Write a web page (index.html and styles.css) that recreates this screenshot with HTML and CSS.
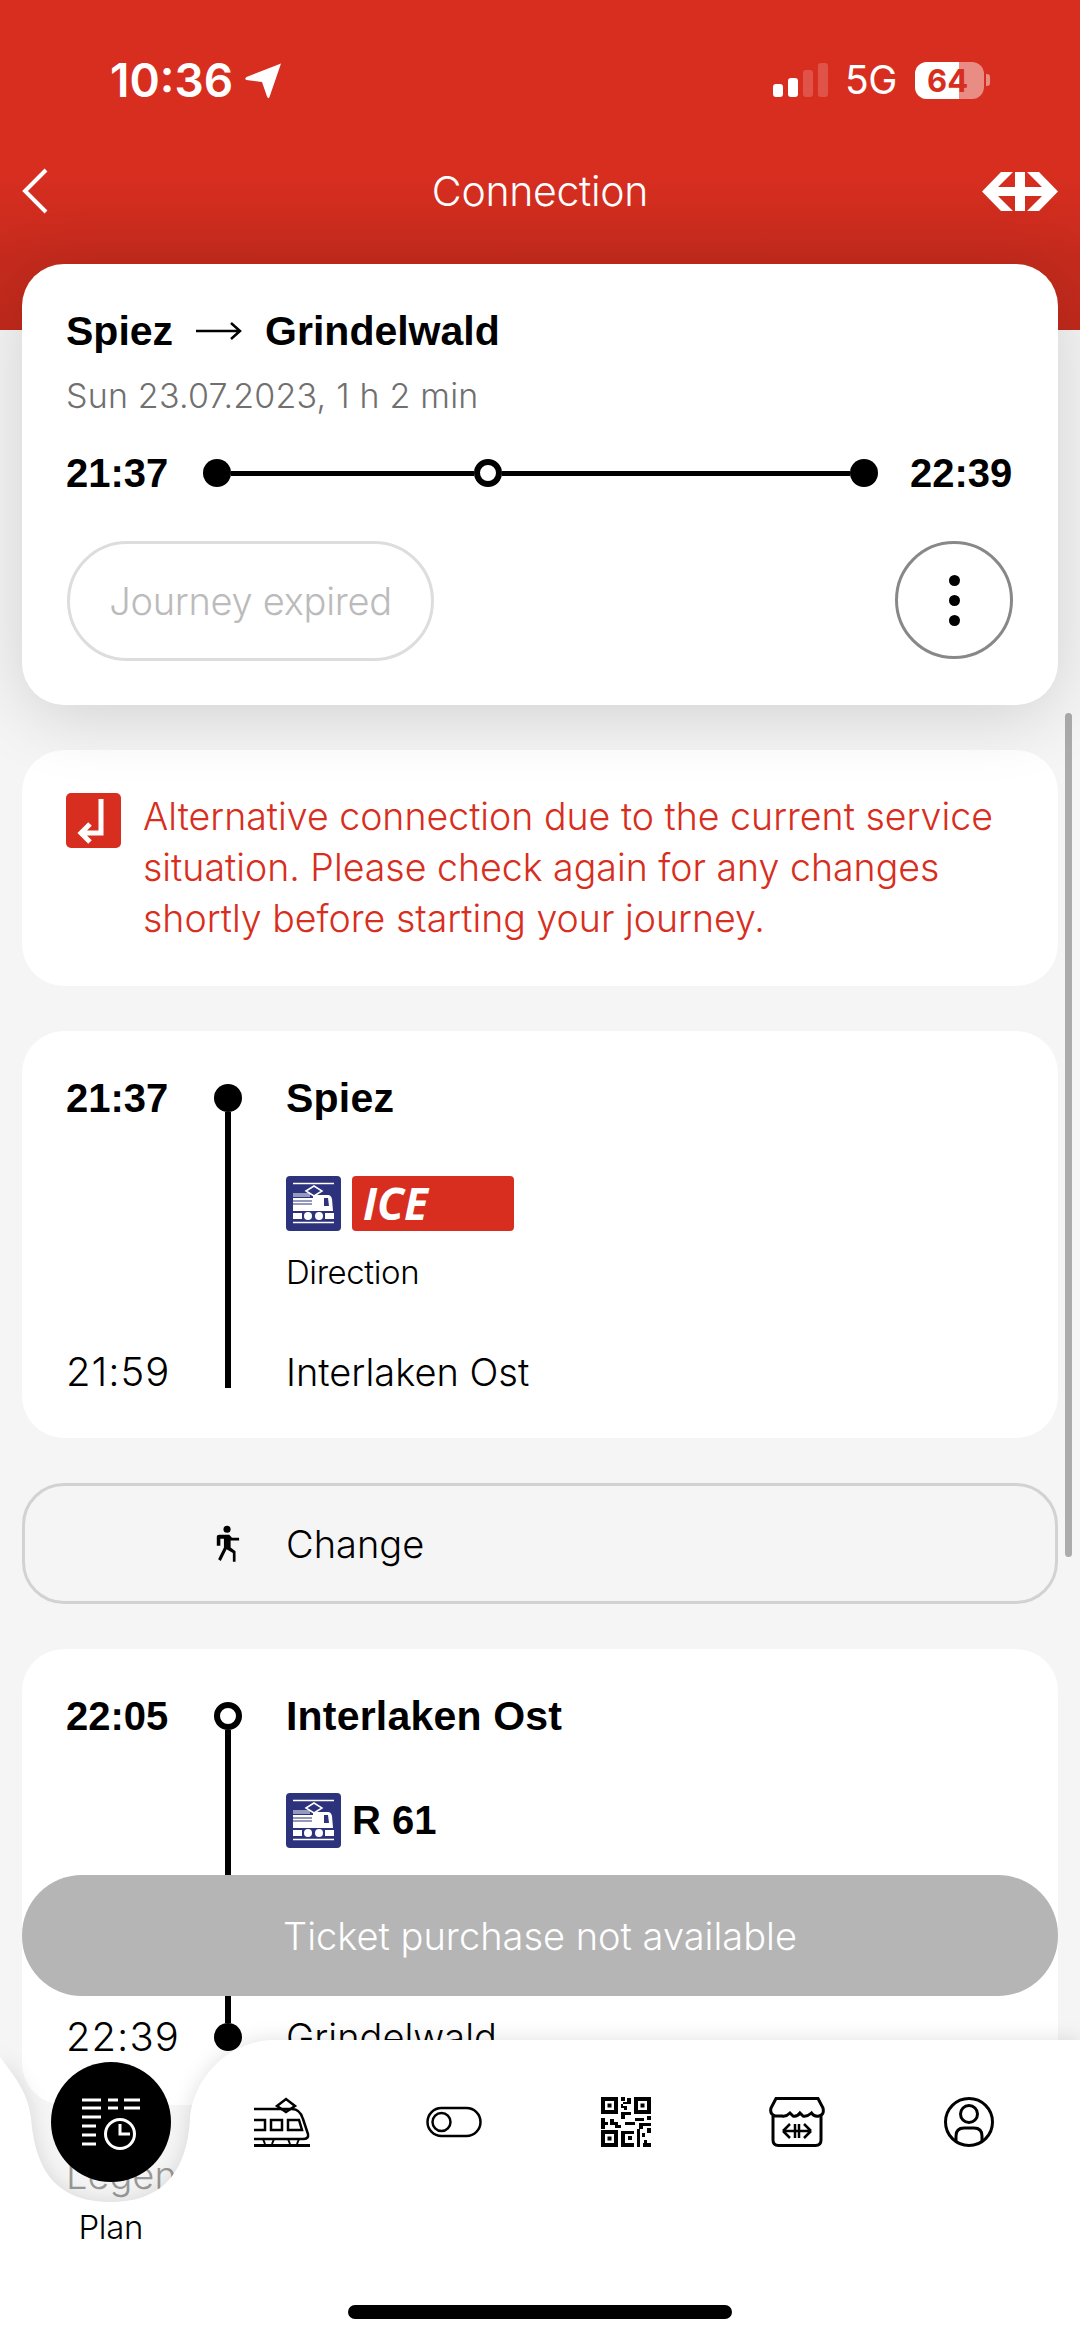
FILE: index.html
```html
<!DOCTYPE html>
<html lang="en">
<head>
<meta charset="utf-8">
<title>Connection</title>
<link rel="stylesheet" href="styles.css">
</head>
<body>
<div class="phone">
  <header class="header">
    <div class="status">
      <div class="clock"><span>10:36</span>
        <svg class="loc" viewBox="0 0 37 36"><path d="M36 0.500 L24.500 34 Q23.500 36.500 22 33.500 L17 19 L1.500 17 Q-1 16 1.500 14 Z" fill="#fff"/></svg>
      </div>
      <div class="status-right">
        <div class="signal"><i class="b1"></i><i class="b2"></i><i class="b3"></i><i class="b4"></i></div>
        <span class="net">5G</span>
        <div class="battery"><div class="battery-fill"></div><span>64</span></div>
        <div class="nub"></div>
      </div>
    </div>
    <nav class="nav">
      <svg class="back" viewBox="0 0 26 46"><path d="M24 2 L3 23 L24 44" fill="none" stroke="#fff" stroke-width="4"/></svg>
      <h1 class="nav-title">Connection</h1>
      <svg class="logo" viewBox="0 0 76 39"><polygon fill="#fff" points="0,19.500 19,0 31,0 16,15 33,15 33,0 43,0 43,15 60,15 45,0 57,0 76,19.500 57,39 45,39 60,24 43,24 43,39 33,39 33,24 16,24 31,39 19,39"/></svg>
    </nav>
  </header>

  <main class="main">
    <section class="card journey">
      <div class="route"><span>Spiez</span>
        <svg class="route-arrow" viewBox="0 0 46 20"><path d="M0 10 H44 M35 2 L44 10 L35 18" fill="none" stroke="#000" stroke-width="2.500"/></svg>
        <span>Grindelwald</span></div>
      <div class="date">Sun 23.07.2023, 1 h 2 min</div>
      <div class="overview">
        <b class="time">21:37</b>
        <div class="track"><i class="dot"></i><i class="track-line short"></i><i class="dot hollow"></i><i class="track-line long"></i><i class="dot"></i></div>
        <b class="time">22:39</b>
      </div>
      <div class="actions">
        <div class="expired">Journey expired</div>
        <div class="more"><i></i><i></i><i></i></div>
      </div>
    </section>

    <section class="card alert">
      <svg class="alert-icon" viewBox="0 0 55 55"><rect width="55" height="55" rx="5" fill="#d82e20"/><path d="M35 7 V41 H15 M24 32 L15 41 L24 50" transform="translate(0 -1)" fill="none" stroke="#fff" stroke-width="5"/></svg>
      <p class="alert-text">Alternative connection due to the current service situation. Please check again for any changes shortly before starting your journey.</p>
    </section>

    <section class="card segment first">
      <div class="times"><b class="time-row">21:37</b><span class="time-row">21:59</span></div>
      <div class="rail rail-open"><i class="dot"></i><i class="rail-line"></i></div>
      <div class="info">
        <b class="stop">Spiez</b>
        <div class="service">
          <svg class="transport" viewBox="0 0 55 55"><use href="#train"/></svg>
          <div class="ice">ICE</div>
        </div>
        <div class="direction">Direction</div>
        <div class="stop arrival">Interlaken Ost</div>
      </div>
    </section>

    <section class="change">
      <svg class="walk" viewBox="0 0 28 42"><circle cx="13.500" cy="4.500" r="4" fill="#000"/><path d="M2 23 V13 Q2 10.500 5 10.500 H16 L19 14 H27 V17 H17.500 V25 L23 29 V41 H20 V31 L13 27 L6.500 40 L3.500 38 L10 25 V15 H6 V23 Z" fill="#000"/></svg>
      <span>Change</span>
    </section>

    <section class="card segment second">
      <div class="times"><b class="time-row">22:05</b><span class="time-row">22:39</span></div>
      <div class="rail rail-closed"><i class="dot hollow"></i><i class="rail-line"></i><i class="dot"></i></div>
      <div class="info">
        <b class="stop">Interlaken Ost</b>
        <div class="service">
          <svg class="transport" viewBox="0 0 55 55"><use href="#train"/></svg>
          <b class="line-name">R 61</b>
        </div>
        <div class="direction">Direction</div>
        <div class="stop arrival far">Grindelwald</div>
      </div>
    </section>
    <div class="legend">Legend</div>
  </main>

  <div class="scrollbar"></div>
  <div class="buy">Ticket purchase not available</div>

  <div class="tabbar">
    <svg class="tab-bg" viewBox="0 0 1080 301"><path d="M275 0 H1080 V301 H0 V17 C14 36 28 52 31 78 C35 125 52 162 111 162 C168 162 187 125 190 80 C192 42 225 0 275 0 Z" fill="#fff"/></svg>
    <div class="tabs">
      <div class="tab active">
        <div class="tab-circle">
          <svg class="plan-icon" viewBox="0 0 58 52" fill="none" stroke="#fff" stroke-width="3">
            <path d="M0 2 H19 M26 2 H36 M42 2 H58 M0 10 H19 M26 10 H36 M42 10 H58 M0 19 H19 M0 28 H14 M0 37 H14 M0 46 H14"/>
            <circle cx="38" cy="36" r="14.500"/><path d="M38 26 V36 H48"/>
          </svg>
        </div>
        <span class="tab-label">Plan</span>
      </div>
      <div class="tab">
        <svg class="tab-icon" viewBox="0 0 56 50" fill="none" stroke="#000" stroke-width="2.500">
          <path d="M23 9 L32 2 L41 9 L32 15 Z"/>
          <path d="M0 12 H38 Q46 12 49 22 L54 37 Q55 42 49 42 H0"/>
          <path d="M0 23 H11 V33 H0 M17 23 H28 V33 H17 Z M34 23 H45 L48 33 H34 Z"/>
          <path d="M9 42 L11 47 M20 42 L18 47 M34 42 L36 47 M45 42 L43 47" stroke-width="2"/>
          <path d="M0 48.500 H56" stroke-width="3"/>
        </svg>
      </div>
      <div class="tab">
        <svg class="tab-icon" viewBox="0 0 56 50" fill="none" stroke="#000" stroke-width="2.500">
          <rect x="1.500" y="11" width="53" height="28" rx="14"/><circle cx="15.500" cy="25" r="9"/>
        </svg>
      </div>
      <div class="tab">
        <svg class="tab-icon qr" viewBox="0 0 50 50" fill="#000">
          <path fill-rule="evenodd" d="M0 0 H17 V17 H0 Z M4 4 V13 H13 V4 Z M33 0 H50 V17 H33 Z M37 4 V13 H46 V4 Z M0 33 H17 V50 H0 Z M4 37 V46 H13 V37 Z"/>
          <path d="M6.500 6.500 H10.500 V10.500 H6.500 Z M39.500 6.500 H43.500 V10.500 H39.500 Z M6.500 39.500 H10.500 V43.500 H6.500 Z"/>
          <path d="M20 0 H24 V4 H20 Z M26 1 H30 V7 H26 V5 H22 V9 H26 V13 H23 V11 H20 V7 H26 Z M20 15 H30 V18 H24 V22 H20 Z M34 21 H43 V24 H34 Z M46 19 H50 V23 H46 Z M0 21 H4 V25 H7 V28 H4 V32 H0 Z M9 22 H13 V25 H17 V28 H20 V31 H14 V28 H9 Z M24 25 H34 V28 H24 Z M38 26 H50 V29 H42 V32 H38 Z M46 31 H50 V36 H46 Z M20 34 H33 V37 H24 V46 H33 V50 H20 Z M27 39 H31 V43 H27 Z M36 32 H39 V50 H36 Z M41 36 H44 V40 H41 Z M43 43 H46 V46 H50 V50 H42 V46 H43 Z"/>
        </svg>
      </div>
      <div class="tab">
        <svg class="tab-icon" viewBox="0 0 56 50" fill="none" stroke="#000" stroke-width="3">
          <path d="M7 1.500 H49 L54 11 Q55.500 18 50 19 Q45 20 42.500 16 Q38 20 34 19 L31 16 Q28 20 24 19 L21 16 Q17 20 13 19 Q10 19 6 19 Q0.500 17 2 11 Z"/>
          <path d="M4 19 V43 Q4 48.500 9.500 48.500 H46.500 Q52 48.500 52 43 V19"/>
          <path d="M14 34 L21 27 M14 34 L21 41 M42 34 L35 27 M42 34 L35 41 M15 34 H41 M26 27 V41 M30 27 V41" stroke-width="2.500"/>
        </svg>
      </div>
      <div class="tab">
        <svg class="tab-icon" viewBox="0 0 50 50" fill="none" stroke="#000" stroke-width="3">
          <circle cx="25" cy="25" r="23.500"/><circle cx="25" cy="17" r="8.500"/><path d="M12 44 V39 Q12 31 20 31 H30 Q38 31 38 39 V44"/>
        </svg>
      </div>
    </div>
    <div class="home"></div>
  </div>

  <svg class="defs" width="0" height="0">
    <defs>
      <g id="train">
        <rect width="55" height="55" rx="4" fill="#2d327d"/>
        <path d="M7 7.500 H48 M7 46.500 H48" stroke="#fff" stroke-width="1.500"/>
        <path d="M20 15 L28 10 L36 15 L28 20 Z" fill="none" stroke="#fff" stroke-width="1.500"/>
        <path d="M7 18 H24 M7 20 H24" stroke="#fff" stroke-width="1.200"/>
        <path d="M7 22 H27 V19 H42 Q45 19 46 23 L47 35 H7 Z M38 22 V30 H43 L42 22 Z" fill="#fff" fill-rule="evenodd"/>
        <path d="M7 25 H26 M7 28 H26" stroke="#2d327d" stroke-width="1.200"/>
        <path d="M7 37 H16 V43 H7 Z M39 37 H48 V43 H39 Z" fill="#fff"/>
        <circle cx="22" cy="40" r="4" fill="#fff"/><circle cx="33" cy="40" r="4" fill="#fff"/>
      </g>
    </defs>
  </svg>
</div>
</body>
</html>
```
FILE: styles.css
```css
* { box-sizing: border-box; }
html, body { margin: 0; padding: 0; }
body {
  width: 1080px;
  height: 2341px;
  overflow: hidden;
  background: #f5f5f5;
  font-family: "Inter", "Liberation Sans", sans-serif;
  font-weight: 300;
  color: #000;
}
i { display: block; font-style: normal; }
.phone { position: relative; width: 1080px; height: 2341px; overflow: hidden; }
.defs { position: absolute; }

.header {
  height: 330px;
  background: linear-gradient(#d82e20 0, #d82e20 170px, #c52b1d 262px, #c22a1c 330px);
  color: #fff;
}
.status {
  height: 100px;
  padding: 58px 90px 0 110px;
  display: flex;
  justify-content: space-between;
}
.clock {
  display: flex;
  align-items: flex-start;
  gap: 12px;
  font-family: "Inter", sans-serif;
  font-weight: 600;
  font-size: 46px;
  line-height: 44px;
}
.loc { width: 37px; height: 36px; margin-top: 5px; }
.status-right { display: flex; align-items: flex-start; }
.signal { display: flex; gap: 5px; align-items: flex-end; height: 34px; margin: 5px 17px 0 0; }
.signal i { width: 10px; border-radius: 3px; background: #fff; }
.signal .b1 { height: 13px; }
.signal .b2 { height: 19px; }
.signal .b3 { height: 27px; background: rgba(255,255,255,.18); }
.signal .b4 { height: 34px; background: rgba(255,255,255,.18); }
.net { font-family: "Inter", sans-serif; font-weight: 400; font-size: 39px; line-height: 44px; width: 70px; letter-spacing: -.500px; }
.battery {
  position: relative;
  width: 69px; height: 37px;
  margin-top: 4px;
  border-radius: 12px;
  overflow: hidden;
  background: rgba(255,255,255,.45);
}
.battery-fill { width: 44px; height: 37px; background: #fff; }
.battery span {
  position: absolute; left: 12px; top: 0;
  font-family: "Inter", sans-serif; font-weight: 700; font-size: 31px; line-height: 37px;
  color: #d82e20;
}
.nub { width: 4px; height: 12px; margin: 16px 0 0 2px; border-radius: 0 3px 3px 0; background: rgba(255,255,255,.45); }
.nav {
  height: 60px;
  margin-top: 61px;
  padding: 0 22px;
  display: grid;
  grid-template-columns: 1fr auto 1fr;
  align-items: center;
}
.back { width: 26px; height: 46px; }
.nav-title { margin: 0; font-size: 41px; font-weight: 300; line-height: 60px; letter-spacing: -.300px; }
.logo { width: 76px; height: 39px; justify-self: end; }

.main { margin-top: -66px; padding: 0 22px; display: flex; flex-direction: column; }
.card { background: #fff; border-radius: 42px; }
.journey {
  position: relative;
  z-index: 2;
  padding: 42px 44px 44px;
  box-shadow: 0 10px 70px rgba(0,0,0,.15);
}
.route {
  display: flex; align-items: center; gap: 23px;
  font-family: "Liberation Sans", sans-serif; font-weight: 700; font-size: 41px; line-height: 50px;
}
.route-arrow { width: 46px; height: 20px; }
.date { margin-top: 18px; font-size: 34px; line-height: 44px; color: #707070; letter-spacing: .200px; }
.overview { margin-top: 30px; display: flex; align-items: center; justify-content: space-between; }
.time { font-family: "Liberation Sans", sans-serif; font-weight: 700; font-size: 40px; line-height: 50px; width: 104px; }
.track { width: 675px; display: flex; align-items: center; }
.track-line { height: 5px; background: #000; }
.track-line.short { width: 243px; }
.track-line.long { flex: 1; }
.dot { width: 28px; height: 28px; border-radius: 50%; background: #000; flex: none; }
.dot.hollow { background: #fff; border: 6px solid #000; }
.actions { margin-top: 43px; padding: 0 1px 0 1px; display: flex; justify-content: space-between; }
.expired {
  width: 367px; height: 120px; border: 3px solid #ddd; border-radius: 60px;
  display: flex; align-items: center; justify-content: center;
  font-size: 38px; color: #bbb; letter-spacing: -.300px;
}
.more {
  width: 118px; height: 118px; border: 3px solid #888; border-radius: 50%;
  display: flex; flex-direction: column; align-items: center; justify-content: center; gap: 9px;
}
.more i { width: 11px; height: 11px; border-radius: 50%; background: #000; }

.alert {
  margin-top: 45px;
  height: 236px;
  padding: 43px 44px 0;
  display: flex;
  align-items: flex-start;
  gap: 22px;
}
.alert-icon { width: 55px; height: 55px; flex: none; }
.alert-text { margin: -2px 0 0; font-size: 37.500px; line-height: 51px; color: #d82e20; letter-spacing: 0; }

.segment {
  display: grid;
  grid-template-columns: 140px 44px 1fr;
  padding: 42px 44px 41px;
}
.first { margin-top: 45px; }
.second { margin-top: 45px; padding-top: 42px; padding-bottom: 43px; }
.times { display: flex; flex-direction: column; justify-content: space-between; }
.time-row { font-size: 40px; line-height: 50px; letter-spacing: 1px; }
b.time-row { font-family: "Liberation Sans", sans-serif; font-weight: 700; font-size: 40px; letter-spacing: 0; }
.rail { display: flex; flex-direction: column; align-items: center; padding-top: 11px; }
.rail-open { padding-bottom: 9px; }
.rail-closed { padding-bottom: 11px; }
.rail-line { flex: 1; width: 6px; background: #000; }
.info { padding-left: 36px; display: flex; flex-direction: column; }
.stop { font-size: 38px; line-height: 50px; letter-spacing: 0; }
b.stop { font-family: "Liberation Sans", sans-serif; font-weight: 700; font-size: 41px; letter-spacing: .200px; }
.service { margin-top: 53px; display: flex; align-items: center; gap: 11px; height: 55px; }
.second .service { margin-top: 52px; }
.transport { width: 55px; height: 55px; }
.ice {
  width: 162px; height: 55px; border-radius: 4px; background: #d82e20; color: #fff;
  font-family: "Open Sans", sans-serif; font-weight: 700; font-style: italic; font-size: 44px; line-height: 55px;
  padding-left: 11px;
}
.line-name { font-family: "Liberation Sans", sans-serif; font-weight: 700; font-size: 40px; }
.direction { margin-top: 19px; font-size: 33px; line-height: 44px; letter-spacing: -.400px; }
.arrival { margin-top: 53px; }
.arrival.far { margin-top: 101px; }

.change {
  margin-top: 45px;
  height: 121px;
  border: 3px solid #d2d2d2;
  border-radius: 42px;
  padding-left: 190px;
  display: flex; align-items: center; gap: 46px;
  font-size: 38px;
}
.walk { width: 25px; height: 40px; }
.legend { margin-top: 45px; padding-left: 44px; font-size: 38px; line-height: 50px; color: #999; }

.scrollbar { position: absolute; right: 8px; top: 713px; width: 7px; height: 844px; border-radius: 4px; background: rgba(0,0,0,.3); }
.buy {
  position: absolute; left: 22px; right: 22px; top: 1875px; height: 121px;
  border-radius: 60px; background: #b5b5b5; color: #fff;
  display: flex; align-items: center; justify-content: center;
  font-size: 38px;
}
.tabbar { position: absolute; left: 0; right: 0; bottom: 0; height: 301px; }
.tab-bg { position: absolute; left: 0; top: 0; width: 1080px; height: 301px; filter: drop-shadow(0 0 10px rgba(0,0,0,.12)); }
.tabs { position: relative; display: grid; grid-template-columns: repeat(6, 171.600px); padding: 22px 25px 0; }
.tab { display: flex; flex-direction: column; align-items: center; }
.tab-circle { width: 120px; height: 120px; border-radius: 50%; background: #000; display: flex; align-items: center; justify-content: center; }
.plan-icon { width: 58px; height: 52px; margin: 4px 0 0 0; }
.tab-label { margin-top: 25px; font-size: 33px; line-height: 40px; letter-spacing: -.300px; }
.tab-icon { width: 56px; height: 50px; margin-top: 35px; }
.tab-icon.qr { width: 50px; }
.home { position: absolute; left: 348px; top: 265px; width: 384px; height: 14px; border-radius: 7px; background: #000; }
```
